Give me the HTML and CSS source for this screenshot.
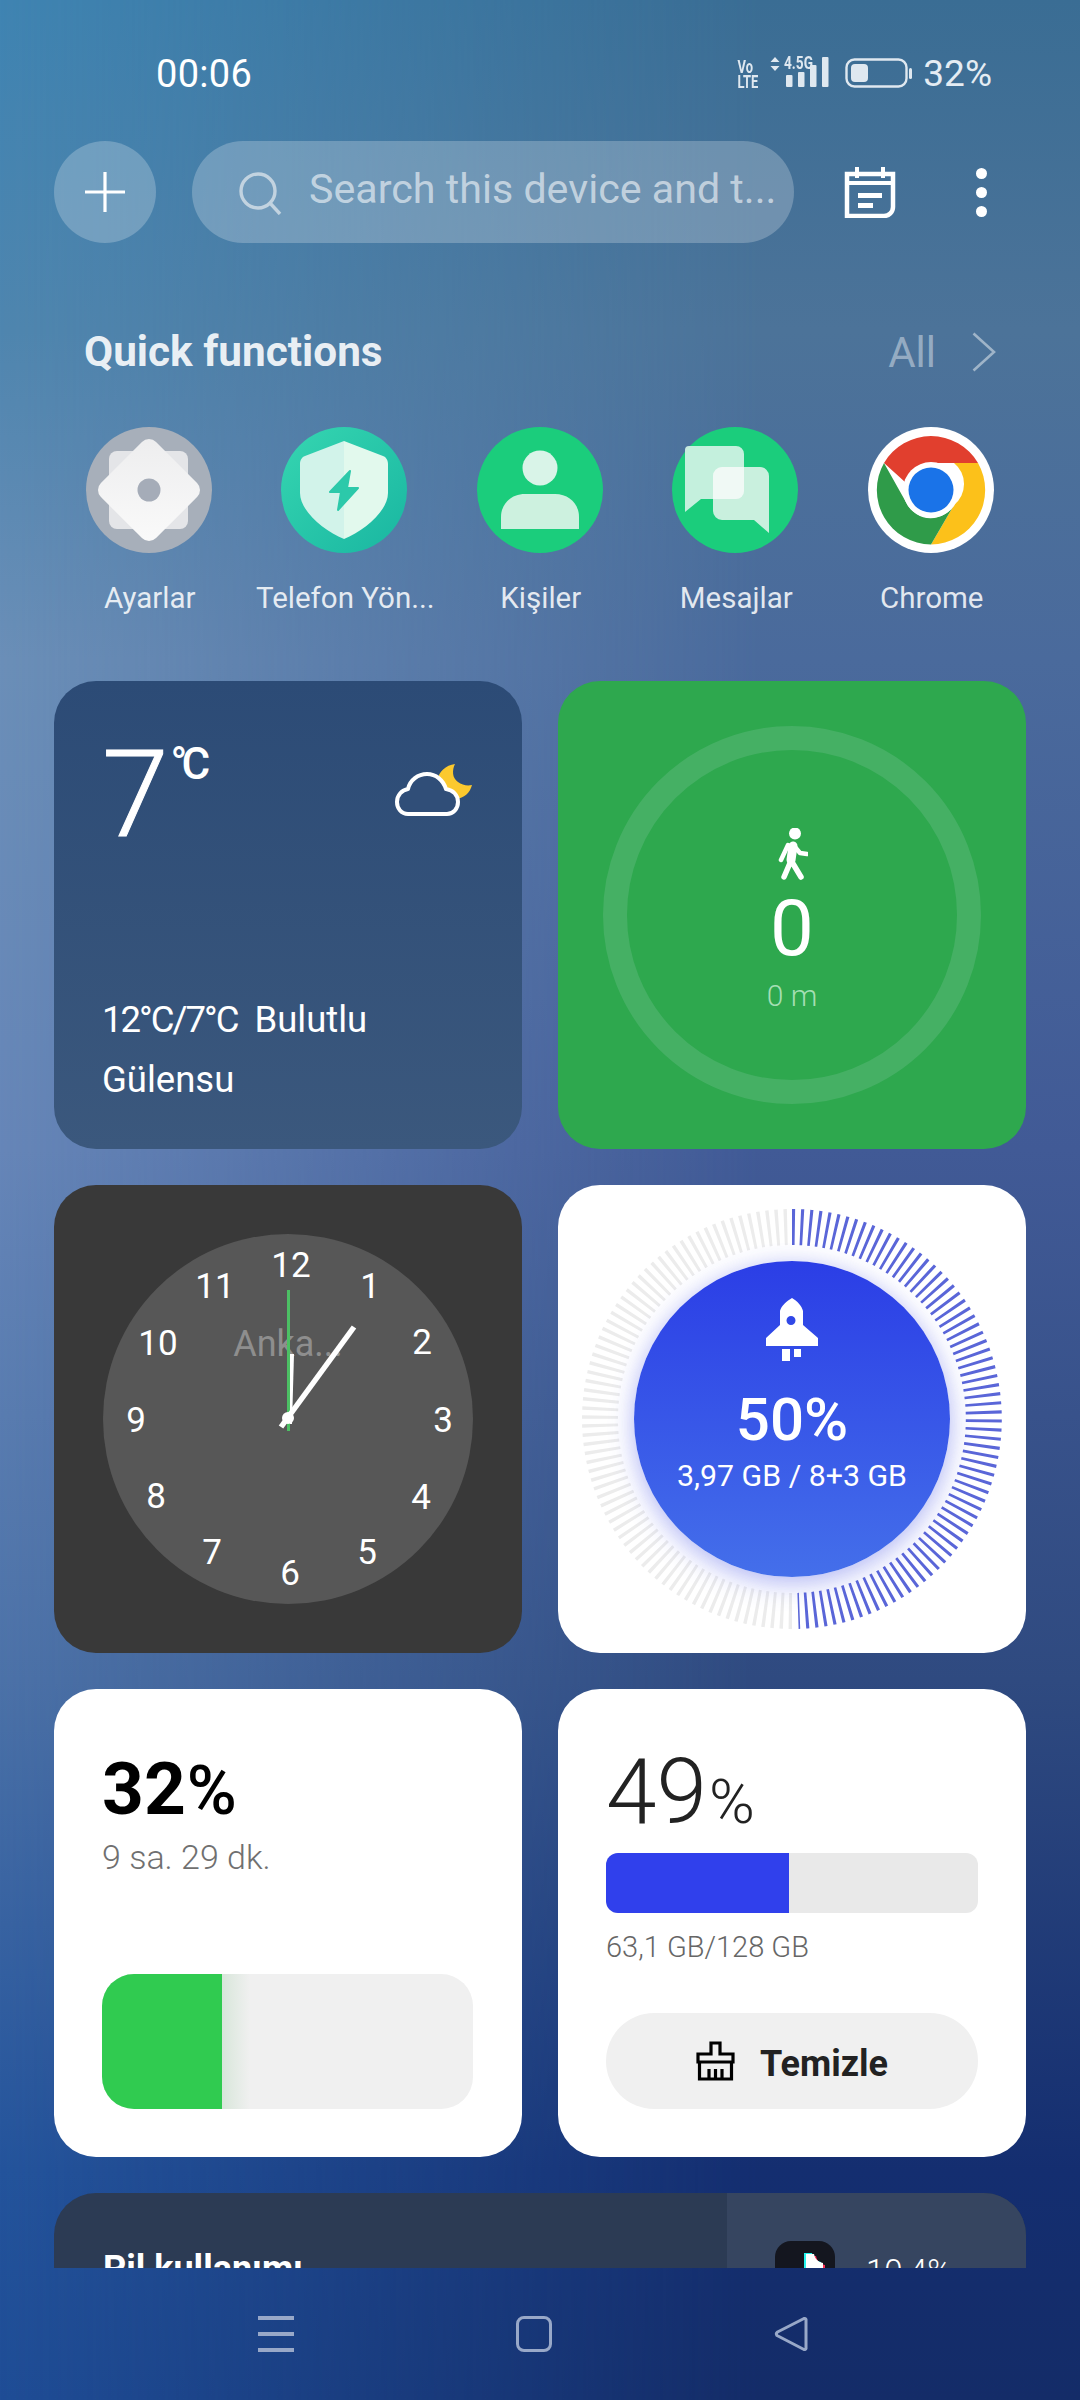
FILE: index.html
```html
<!DOCTYPE html>
<html lang="tr">
<head>
<meta charset="utf-8">
<title>Smart Sidebar</title>
<link rel="stylesheet" href="styles.css">
</head>
<body>
<div class="screen">
  <main class="launcher">
    <header class="status-bar">
      <span class="time">00:06</span>
      <div class="status-icons">
        <span class="volte">Vo<br>LTE</span>
        <div class="signal">
          <svg class="signal-arrows" viewBox="0 0 10 14" width="10" height="14"><path d="M5 0l4.500 5h-9zM5 14L.5 9h9z"/></svg>
          <span class="signal-type">4.5G</span>
          <svg class="signal-bars" viewBox="0 0 44 30" width="44" height="30"><rect x="0" y="18" width="6.500" height="12" rx="1"/><rect x="12" y="15" width="6.500" height="15" rx="1"/><rect x="24" y="8" width="6.500" height="22" rx="1"/><rect x="36" y="0" width="6.500" height="30" rx="1"/></svg>
        </div>
        <svg class="battery" viewBox="0 0 67 30" width="67" height="30"><rect x="1.500" y="1.500" width="60" height="27" rx="8" fill="none" stroke="#dfe8f0" stroke-width="2.400"/><rect x="6" y="6" width="17" height="18" rx="4" fill="#dfe8f0"/><rect x="64" y="10" width="3" height="11" rx="1.500" fill="#dfe8f0"/></svg>
        <span class="battery-text">32%</span>
      </div>
    </header>

    <div class="search-row">
      <button class="add-btn" type="button" aria-label="Add">
        <svg viewBox="0 0 42 42" width="42" height="42"><path d="M21 1v40M1 21h40" stroke="#fff" stroke-width="3.200"/></svg>
      </button>
      <div class="search-box">
        <svg class="search-icon" viewBox="0 0 44 44" width="44" height="44"><circle cx="20" cy="20" r="17" fill="none" stroke="#c2d3e0" stroke-width="3.400"/><path d="M32 32l10 11" stroke="#c2d3e0" stroke-width="3.400"/></svg>
        <span class="search-text">Search this device and t...</span>
      </div>
      <svg class="calendar" viewBox="0 0 52 52" width="52" height="52"><path d="M3 8h46v33a9 9 0 0 1-9 9H3z" fill="none" stroke="#fff" stroke-width="4.500"/><path d="M2 17h48" stroke="#fff" stroke-width="4"/><path d="M13 1v11M39 1v11" stroke="#fff" stroke-width="4"/><path d="M14 27h24v5H14zM14 37h15v5H14z" fill="#fff"/></svg>
      <div class="kebab"><i></i><i></i><i></i></div>
    </div>

    <div class="section-head">
      <h2>Quick functions</h2>
      <div class="all-link">
        <span>All</span>
        <svg viewBox="0 0 24 40" width="24" height="40"><path d="M1.500 1.500L22 20 1.500 38.500" fill="none" stroke="#9fb4c8" stroke-width="2.600"/></svg>
      </div>
    </div>

    <div class="apps">
      <div class="app">
        <svg class="app-icon" viewBox="0 0 126 126">
          <defs><linearGradient id="gearTop" x1="0" y1="0" x2="1" y2="1"><stop offset="0" stop-color="#ededee"/><stop offset="1" stop-color="#fafafa"/></linearGradient></defs>
          <circle cx="63" cy="63" r="63" fill="#a7afba"/>
          <rect x="23" y="24" width="79" height="78" rx="8" fill="#e4e5e8"/>
          <rect x="24" y="24" width="78" height="78" rx="10" transform="rotate(45 63 63)" fill="url(#gearTop)"/>
          <circle cx="63" cy="63" r="11.500" fill="#a5acb8"/>
        </svg>
        <span class="app-label">Ayarlar</span>
      </div>
      <div class="app">
        <svg class="app-icon" viewBox="0 0 126 126">
          <defs><linearGradient id="shieldBg" x1="0" y1="0" x2="1" y2="1"><stop offset="0" stop-color="#36d6b1"/><stop offset="1" stop-color="#19b6a1"/></linearGradient></defs>
          <circle cx="63" cy="63" r="63" fill="url(#shieldBg)"/>
          <path d="M63 14L24 29c-3 1-5 4-5 8v29c0 18 24 38 44 46z" fill="#d2f3ea"/>
          <path d="M63 14l39 15c3 1 5 4 5 8v29c0 18-24 38-44 46z" fill="#e2f9ed"/>
          <path d="M69 44L49 65h11l-3 18 20-22H66z" fill="#2cc9aa" stroke="#2cc9aa" stroke-width="2" stroke-linejoin="round"/>
        </svg>
        <span class="app-label">Telefon Yön...</span>
      </div>
      <div class="app">
        <svg class="app-icon" viewBox="0 0 126 126">
          <circle cx="63" cy="63" r="63" fill="#1bcd7c"/>
          <circle cx="63" cy="41" r="17.500" fill="#d9f4e8"/>
          <path d="M24 102V90c0-13 10-23 24-23h30c14 0 24 10 24 23v12z" fill="#cdf1df"/>
        </svg>
        <span class="app-label">Kişiler</span>
      </div>
      <div class="app">
        <svg class="app-icon" viewBox="0 0 126 126">
          <circle cx="63" cy="63" r="63" fill="#1bcd7c"/>
          <path d="M50 40h38a9 9 0 0 1 9 9v57L82 93H50a9 9 0 0 1-9-9V49a9 9 0 0 1 9-9z" fill="#c9f0de"/>
          <path d="M17 19h47a8 8 0 0 1 8 8v37a8 8 0 0 1-8 8H29L13 85V23a4 4 0 0 1 4-4z" fill="#d3f3e5" fill-opacity=".92"/>
          <path d="M50 40h22v24a8 8 0 0 1-8 8H41V49a9 9 0 0 1 9-9z" fill="#f0f9f5"/>
        </svg>
        <span class="app-label">Mesajlar</span>
      </div>
      <div class="app">
        <svg class="app-icon" viewBox="0 0 126 126">
          <circle cx="63" cy="63" r="63" fill="#fff"/>
          <path d="M16 36A54.500 54.500 0 0 1 110 36H63a27 27 0 0 0-26 19z" fill="#e13f2e"/>
          <path d="M110 36a54.500 54.500 0 0 1-47 81.500L86 78a27 27 0 0 0 0-42z" fill="#fcc11a"/>
          <path d="M63 117.500A54.500 54.500 0 0 1 16 36l23 41a27 27 0 0 0 47 1z" fill="#2f9b49"/>
          <circle cx="63" cy="63" r="28" fill="#fff"/>
          <circle cx="63" cy="63" r="22.500" fill="#1a73e8"/>
        </svg>
        <span class="app-label">Chrome</span>
      </div>
    </div>

    <div class="widgets">
      <section class="card weather">
        <div class="weather-top">
          <div class="temp"><span class="temp-value">7</span><span class="temp-unit">°C</span></div>
          <svg class="weather-icon" viewBox="0 0 85 60" width="85" height="60">
            <path d="M65 4C62 10 62 18 68 22 72 25 77 26 82 25 80 33 74 38 66 39 56 39 48 30 48 20 48 12 56 5 65 4z" fill="#fcc92e"/>
            <path d="M18 54C11 54 7 48 7 42 7 35 12 30 18 29 20 20 28 14 37 14 46 14 53 20 56 29 63 30 68 35 68 42 68 49 63 54 57 54z" fill="#304e78" stroke="#fff" stroke-width="4" stroke-linejoin="round"/>
          </svg>
        </div>
        <div class="weather-info">
          <p><span class="temp-range">12°C/7°C</span> Bulutlu</p>
          <p>Gülensu</p>
        </div>
      </section>

      <section class="card steps">
        <div class="steps-ring">
          <svg class="walker" viewBox="0 0 32 52" width="32" height="52">
            <circle cx="19" cy="5.500" r="6" fill="#fff"/>
            <path d="M17 18L15 32" fill="none" stroke="#fff" stroke-width="9" stroke-linecap="round"/>
            <path d="M12 17L5 32M19 19l5 6 7 1" fill="none" stroke="#fff" stroke-width="4.500" stroke-linecap="round" stroke-linejoin="round"/>
            <path d="M14 35L8 49M16 34l9 15" fill="none" stroke="#fff" stroke-width="5.500" stroke-linecap="round"/>
          </svg>
          <span class="steps-count">0</span>
          <span class="steps-dist">0 m</span>
        </div>
      </section>

      <section class="card clock">
        <svg class="clock-face" viewBox="0 0 468 468">
          <circle cx="234" cy="234" r="185" fill="#575757"/>
          <text class="clock-city" x="234" y="171">Anka...</text>
          <g class="clock-nums">
            <text x="237" y="92">12</text>
            <text x="316" y="113">1</text>
            <text x="368" y="169">2</text>
            <text x="389" y="247">3</text>
            <text x="367" y="324">4</text>
            <text x="313" y="379">5</text>
            <text x="236" y="400">6</text>
            <text x="158" y="379">7</text>
            <text x="102" y="323">8</text>
            <text x="82" y="247">9</text>
            <text x="104" y="170">10</text>
            <text x="161" y="113">11</text>
          </g>
          <path d="M235 169h5l-2 70h-5z" fill="#fff"/>
          <path d="M233 105h3v141h-3z" fill="#4cc064"/>
          <path d="M227 242L300 142" fill="none" stroke="#fff" stroke-width="5.500"/>
          <circle cx="234" cy="233" r="6" fill="#fff"/>
        </svg>
      </section>

      <section class="card ram">
        <svg class="ram-ticks" viewBox="0 0 468 468">
          <path d="M234 42A192 192 0 0 1 240 425.900" fill="none" stroke="#5a66d8" stroke-width="36" stroke-dasharray="2.900 5.480"/>
          <path d="M234 426A192 192 0 0 1 234 42" fill="none" stroke="#ececec" stroke-width="36" stroke-dasharray="3.200 5.180"/>
        </svg>
        <div class="ram-ball">
          <svg class="rocket" viewBox="0 0 52 63" width="52" height="63">
            <path fill-rule="evenodd" d="M26 0c5 3 10 8 11 13v14l15 13v8H0v-8l14-13V13C15 8 21 3 26 0zm-1 18a4.500 4.500 0 1 0 0 9 4.500 4.500 0 0 0 0-9z" fill="#fff"/>
            <path d="M16 51h8v12h-8zM28 51h7v8h-7z" fill="#fff"/>
          </svg>
          <span class="ram-pct">50%</span>
          <span class="ram-used">3,97 GB / 8+3 GB</span>
        </div>
      </section>

      <section class="card battery-card">
        <div class="batt-pct"><b>32</b><span>%</span></div>
        <div class="batt-left">9 sa. 29 dk.</div>
        <div class="batt-meter"><div class="batt-fill"></div><div class="batt-fade"></div></div>
      </section>

      <section class="card storage">
        <div class="store-pct"><span class="store-num">49</span><span class="store-sign">%</span></div>
        <div class="store-bar"><div class="store-fill"></div></div>
        <div class="store-size">63,1 GB/128 GB</div>
        <button class="clean-btn" type="button">
          <svg viewBox="0 0 39 40" width="39" height="40"><path d="M15 2h9v11h13v8H2v-8h13zM3.500 21h32v17h-32zM13 28v10M19.500 28v10M26 28v10" fill="none" stroke="#000" stroke-width="3.200"/></svg>
          <span>Temizle</span>
        </button>
      </section>

      <section class="card usage">
        <div class="usage-main"><h3>Pil kullanımı</h3></div>
        <div class="usage-side">
          <div class="usage-app">
            <svg class="tiktok" viewBox="0 0 60 60" width="60" height="60">
              <rect width="60" height="60" rx="16" fill="#14161f"/>
              <path d="M31 13h8c1 5 4 8 9 9v8c-3 0-6-1-9-3v14c0 7-5 12-12 12s-12-5-12-12 6-12 13-11v8c-3-1-5 1-5 3 0 3 2 4 4 4s4-2 4-4z" fill="#fe2c55" transform="translate(2 2)"/>
              <path d="M31 13h8c1 5 4 8 9 9v8c-3 0-6-1-9-3v14c0 7-5 12-12 12s-12-5-12-12 6-12 13-11v8c-3-1-5 1-5 3 0 3 2 4 4 4s4-2 4-4z" fill="#25f4ee" transform="translate(-2 -1)"/>
              <path d="M31 13h8c1 5 4 8 9 9v8c-3 0-6-1-9-3v14c0 7-5 12-12 12s-12-5-12-12 6-12 13-11v8c-3-1-5 1-5 3 0 3 2 4 4 4s4-2 4-4z" fill="#fff"/>
            </svg>
            <span>10,4%</span>
          </div>
        </div>
      </section>
    </div>
  </main>

  <nav class="nav-bar">
    <div class="nav-menu"><i></i><i></i><i></i></div>
    <div class="nav-home"></div>
    <svg class="nav-back" viewBox="0 0 34 36" width="34" height="36"><path d="M30 2.500L3.500 16a2.500 2.500 0 0 0-.5 3.500L30 33.500a1.500 1.500 0 0 0 2-1V3.500a1.500 1.500 0 0 0-2-1z" fill="none" stroke="#98a8c8" stroke-width="3" stroke-linejoin="round"/></svg>
  </nav>
</div>
</body>
</html>
```

FILE: styles.css
```css
* { box-sizing: border-box; margin: 0; padding: 0; }

html, body { width: 1080px; height: 2400px; overflow: hidden; }

body { font-family: Roboto, "Noto Sans", sans-serif; color: #fff; }

button { font: inherit; border: 0; }

/* wallpaper: left-edge tones, with the darker right-edge tones faded in over them */
.screen {
  position: relative;
  width: 1080px;
  height: 2400px;
  overflow: hidden;
  background: linear-gradient(to bottom,
    #3f84b2 0, #4f86af 330px, #6b8fb8 660px, #6686b8 1150px,
    #4c72a8 1680px, #24549c 2170px, #1f4d96 2400px);
}

.screen::before {
  content: "";
  position: absolute;
  inset: 0;
  background: linear-gradient(to bottom,
    #3a6d94 0, #4c7399 330px, #4a6a9c 660px, #415a96 1150px,
    #2f4a80 1680px, #142e70 2170px, #142c68 2400px);
  -webkit-mask-image: linear-gradient(to right, transparent 0, #000 70%);
  mask-image: linear-gradient(to right, transparent 0, #000 70%);
}

.launcher {
  position: relative;
  height: 2268px;
  overflow: hidden;
}

/* status bar */
.status-bar {
  height: 141px;
  padding: 52px 88px 0 156px;
  display: flex;
  justify-content: space-between;
  align-items: flex-start;
}

.time { font-size: 38px; line-height: 44px; letter-spacing: .3px; }

.status-icons { display: flex; align-items: center; height: 44px; }

.volte {
  display: block;
  width: 22px;
  font-size: 19px;
  line-height: 15.500px;
  font-weight: 700;
  color: #dfe8f0;
  text-align: center;
  white-space: nowrap;
  transform: scaleX(.68);
}

.signal {
  position: relative;
  width: 60px;
  height: 32px;
  margin-left: 14px;
}

.signal-arrows { position: absolute; left: 0; top: -1px; fill: #dfe8f0; }

.signal-type {
  position: absolute;
  left: 14px;
  top: -5px;
  font-size: 18px;
  line-height: 20px;
  font-weight: 700;
  color: #dfe8f0;
  transform: scaleX(.76);
  transform-origin: left center;
}

.signal-bars { position: absolute; left: 16px; top: -1px; fill: #dfe8f0; }

.battery { margin: -2px 0 0 15px; }

.battery-text {
  margin-left: 11px;
  font-size: 37px;
  line-height: 44px;
  color: #e4ecf3;
}

/* search row */
.search-row {
  height: 102px;
  padding-left: 54px;
  display: flex;
  align-items: center;
}

.add-btn {
  width: 102px;
  height: 102px;
  border-radius: 50%;
  background: rgba(255, 255, 255, .23);
  display: flex;
  align-items: center;
  justify-content: center;
}

.search-box {
  width: 602px;
  height: 102px;
  margin-left: 36px;
  padding-left: 46px;
  border-radius: 51px;
  background: rgba(255, 255, 255, .23);
  display: flex;
  align-items: center;
}

.search-text {
  margin: 0 0 6px 27px;
  font-size: 41.200px;
  line-height: 48px;
  color: rgba(255, 255, 255, .58);
  white-space: nowrap;
}

.search-icon { margin-top: 2px; }

.calendar { margin-left: 50px; }

.kebab {
  margin-left: 80px;
  display: flex;
  flex-direction: column;
  gap: 8px;
}

.kebab i {
  display: block;
  width: 11px;
  height: 11px;
  border-radius: 50%;
  background: #fff;
}

/* quick functions */
.section-head {
  height: 184px;
  padding: 84px 84px 0 84px;
  display: flex;
  justify-content: space-between;
  align-items: flex-start;
}

.section-head h2 {
  font-size: 42.300px;
  line-height: 50px;
  font-weight: 700;
  color: rgba(255, 255, 255, .88);
}

.all-link {
  display: flex;
  align-items: center;
  gap: 36px;
  height: 50px;
  font-size: 42px;
  color: rgba(255, 255, 255, .42);
}

.apps {
  height: 254px;
  padding-left: 51px;
  display: grid;
  grid-template-columns: repeat(5, 195.500px);
}

.app {
  display: flex;
  flex-direction: column;
  align-items: center;
}

.app-icon { width: 126px; height: 126px; }

.app-label {
  margin: 26px 0 0 2px;
  font-size: 29.500px;
  line-height: 38px;
  color: rgba(255, 255, 255, .85);
  white-space: nowrap;
}

/* widget grid */
.widgets {
  padding: 0 54px;
  display: grid;
  grid-template-columns: 468px 468px;
  grid-auto-rows: 468px;
  gap: 36px;
}

.card {
  position: relative;
  border-radius: 42px;
  overflow: hidden;
}

.weather {
  padding: 56px 49px 39px 48px;
  background: linear-gradient(to bottom, #2c4b76, #3b587d);
  display: flex;
  flex-direction: column;
  justify-content: space-between;
}

.weather-top { display: flex; justify-content: space-between; }

.temp { display: flex; align-items: flex-start; }

.temp-value {
  font-size: 120px;
  line-height: 116px;
  font-weight: 300;
  -webkit-text-stroke: 1px #fff;
}

.temp-unit {
  margin: 1px 0 0 2px;
  font-size: 44px;
  line-height: 52px;
  font-weight: 500;
  letter-spacing: -6px;
}

.weather-icon { margin: 23px -2px 0 0; }

.weather-info p {
  font-size: 36.500px;
  line-height: 60px;
  white-space: nowrap;
}

.temp-range { margin-right: 8px; letter-spacing: -2px; }

.steps {
  background: #2ea84e;
  display: flex;
  align-items: center;
  justify-content: center;
}

.steps-ring {
  width: 378px;
  height: 378px;
  border: 24px solid #45b064;
  border-radius: 50%;
  padding-top: 78px;
  display: flex;
  flex-direction: column;
  align-items: center;
}

.steps-count {
  margin-top: 9px;
  font-size: 78px;
  line-height: 80px;
}

.steps-dist {
  margin-top: 9px;
  font-size: 30px;
  line-height: 36px;
  font-weight: 300;
  color: #a5dfb4;
}

.clock { background: #393939; }

.clock-face { display: block; width: 468px; height: 468px; }

.clock-nums text {
  font-size: 35px;
  fill: #fff;
  text-anchor: middle;
}

.clock-city {
  font-size: 36px;
  fill: #8e8e8e;
  text-anchor: middle;
}

.ram {
  background: #fff;
  display: flex;
  align-items: center;
  justify-content: center;
}

.ram-ticks { position: absolute; inset: 0; width: 468px; height: 468px; }

.ram-ball {
  position: relative;
  width: 316px;
  height: 316px;
  padding-top: 37px;
  border-radius: 50%;
  background: linear-gradient(to bottom, #2b3ee6, #446fea);
  box-shadow: 0 8px 26px rgba(70, 85, 230, .32), 0 0 20px rgba(70, 85, 230, .14);
  display: flex;
  flex-direction: column;
  align-items: center;
}

.rocket { display: block; }

.ram-pct {
  margin-top: 26px;
  font-size: 60px;
  line-height: 66px;
  font-weight: 500;
}

.ram-used {
  margin-top: 3px;
  font-size: 30.300px;
  line-height: 40px;
  white-space: nowrap;
}

.battery-card {
  padding: 58px 49px 48px 48px;
  background: #fff;
  color: #000;
  display: flex;
  flex-direction: column;
}

.batt-pct { display: flex; align-items: baseline; line-height: 84px; }

.batt-pct b { font-size: 73px; font-weight: 700; }

.batt-pct span { font-size: 68px; font-weight: 500; margin-left: 1px; }

.batt-left {
  margin-top: 3px;
  font-size: 34px;
  line-height: 42px;
  font-weight: 300;
  color: #707070;
}

.batt-meter {
  margin-top: auto;
  height: 135px;
  border-radius: 32px;
  overflow: hidden;
  background: #f0f0f0;
  display: flex;
}

.batt-fill { width: 120px; background: #30cb50; }

.batt-fade { width: 28px; background: linear-gradient(to right, #d8e6da, #f0f0f0); }

.storage {
  padding: 55px 48px 48px;
  background: #fff;
  color: #222;
  display: flex;
  flex-direction: column;
}

.store-pct { display: flex; align-items: baseline; line-height: 96px; font-weight: 300; }

.store-num { font-size: 91px; }

.store-sign { font-size: 62px; margin-left: 2px; }

.store-bar {
  margin-top: 3px;
  height: 60px;
  border-radius: 12px;
  overflow: hidden;
  background: #e9e9e9;
}

.store-fill { width: 49.200%; height: 100%; background: #3040ec; }

.store-size {
  margin-top: 16px;
  font-size: 29px;
  line-height: 36px;
  font-weight: 300;
  color: #666;
  white-space: nowrap;
}

.clean-btn {
  margin-top: auto;
  height: 96px;
  border-radius: 48px;
  background: #f0f0f0;
  color: #222;
  display: flex;
  align-items: center;
  justify-content: center;
  gap: 25px;
  font-size: 36px;
  font-weight: 700;
}

.clean-btn span { padding-top: 5px; }

.usage {
  grid-column: 1 / -1;
  background: #2c3b54;
  display: flex;
  justify-content: space-between;
}

.usage-main { padding: 54px 0 0 49px; }

.usage-main h3 {
  font-size: 36px;
  line-height: 44px;
  font-weight: 700;
  white-space: nowrap;
}

.usage-side { width: 299px; height: 100%; background: #364560; padding: 48px 0 0 48px; }

.usage-app { display: flex; gap: 31px; }

.usage-app span { font-size: 33px; line-height: 40px; padding-top: 11px; font-weight: 300; }

.tiktok { flex: none; }

/* navigation bar */
.nav-bar {
  position: relative;
  height: 132px;
  padding: 48px 0 0 258px;
  display: flex;
  align-items: flex-start;
}

.nav-menu {
  width: 36px;
  height: 36px;
  display: flex;
  flex-direction: column;
  justify-content: space-between;
}

.nav-menu i { display: block; height: 4px; background: #98a8c8; }

.nav-home {
  width: 36px;
  height: 36px;
  margin-left: 222px;
  border: 3px solid #98a8c8;
  border-radius: 8px;
}

.nav-back { margin-left: 222px; }
```
